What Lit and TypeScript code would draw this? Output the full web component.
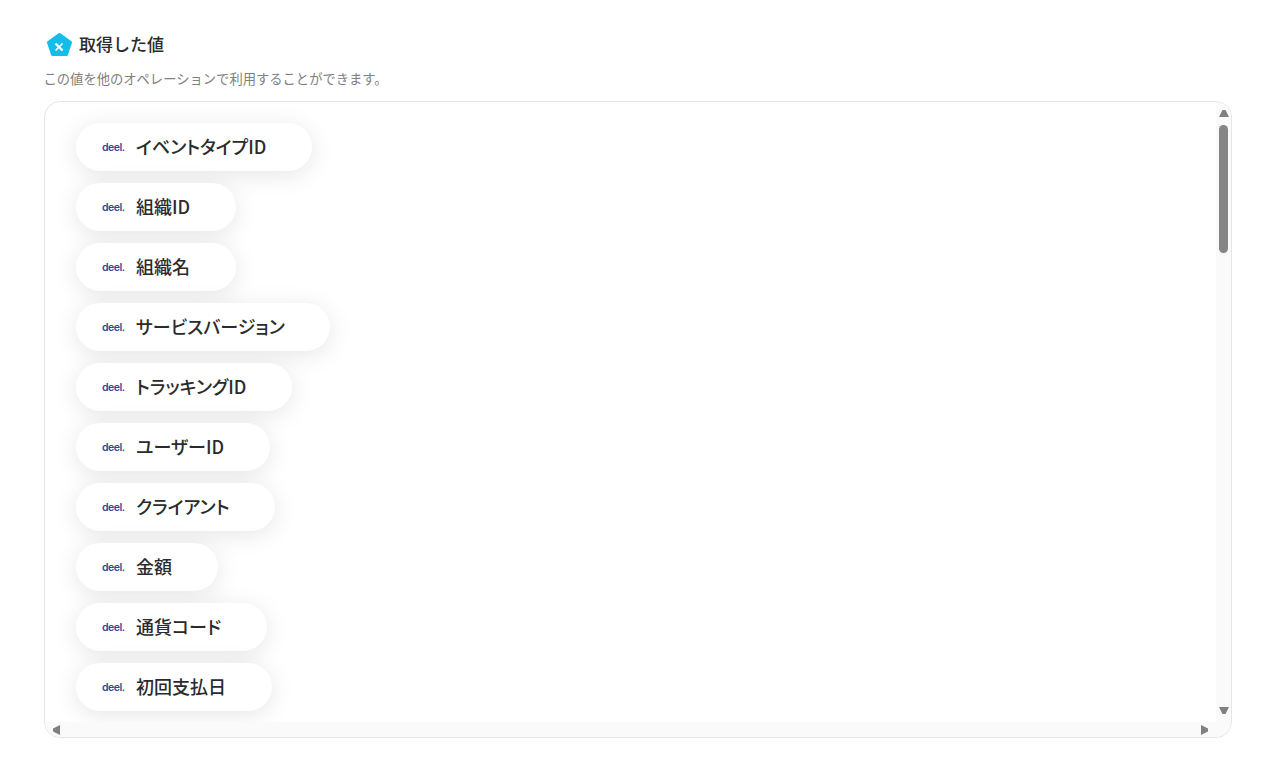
import { LitElement, css, html } from "lit";
import { customElement } from "lit/decorators.js";

const VALUES = [
  "イベントタイプID",
  "組織ID",
  "組織名",
  "サービスバージョン",
  "トラッキングID",
  "ユーザーID",
  "クライアント",
  "金額",
  "通貨コード",
  "初回支払日",
];

@customElement("app-root")
export class AppRoot extends LitElement {
  static styles = css`
    :host {
      display: block;
      height: 776px;
      overflow: hidden;
      background: #fff;
      font-family: "Noto Sans CJK JP", "Noto Sans", sans-serif;
      color: #2b2b2b;
    }

    .page {
      display: flex;
      flex-direction: column;
      padding: 32px 45px 0 44px;
      opacity: 0.999;
    }

    .title {
      display: flex;
      align-items: center;
      gap: 7px;
      height: 26px;
      padding-left: 2px;
      font-size: 17px;
      font-weight: 500;
      line-height: 24px;
    }

    .title svg {
      display: block;
      flex: none;
    }

    .title span {
      margin-top: -2px;
    }

    .hint {
      margin-top: 11px;
      margin-left: -0.5px;
      height: 19px;
      color: #808080;
      font-size: 13.3px;
      line-height: 19px;
    }

    .panel {
      position: relative;
      box-sizing: border-box;
      height: 637px;
      margin-top: 13px;
      overflow: hidden;
      border: 1px solid #e6e6e6;
      border-radius: 16px;
    }

    .list {
      display: flex;
      flex-direction: column;
      align-items: flex-start;
      gap: 12px;
      padding: 21px 0 0 31px;
    }

    .pill {
      display: flex;
      align-items: center;
      gap: 11px;
      height: 48px;
      padding: 0 45.5px 0 26px;
      border-radius: 24px;
      background: #fff;
      box-shadow: 0 4px 24px rgba(0, 0, 0, 0.1);
      font-size: 18px;
      font-weight: 500;
      white-space: nowrap;
      font-feature-settings: "palt";
    }

    .label {
      margin-top: -2px;
    }

    .deel {
      width: 23px;
      color: #2c4a96;
      font-family: Inter, sans-serif;
      font-size: 10.5px;
      font-weight: 600;
      letter-spacing: -0.5px;
    }

    .vbar {
      position: absolute;
      top: 0;
      right: 0;
      bottom: 15px;
      width: 15px;
      background: #fafafa;
    }

    .hbar {
      position: absolute;
      left: 0;
      right: 0;
      bottom: 0;
      height: 15px;
      background: #fafafa;
    }

    .thumb {
      position: absolute;
      top: 23px;
      left: 3px;
      width: 9px;
      height: 128px;
      border-radius: 5px;
      background: #858585;
    }

    .arrow {
      position: absolute;
      background: #808080;
    }

    .up,
    .down {
      left: 3px;
      width: 10px;
      height: 7px;
    }

    .up {
      top: 8px;
      clip-path: polygon(35% 0, 65% 0, 100% 100%, 0 100%);
    }

    .down {
      bottom: 8px;
      clip-path: polygon(0 0, 100% 0, 65% 100%, 35% 100%);
    }

    .left,
    .right {
      top: 3px;
      width: 7px;
      height: 10px;
    }

    .left {
      left: 8px;
      clip-path: polygon(0 35%, 100% 0, 100% 100%, 0 65%);
    }

    .right {
      right: 23px;
      clip-path: polygon(0 0, 100% 35%, 100% 65%, 0 100%);
    }
  `;

  render() {
    return html`
      <div class="page">
        <div class="title">
          <svg width="26" height="26" viewBox="0 0 26 26" aria-hidden="true">
            <polygon
              points="13.5,2.5 24.5,10.5 20.5,22.5 6.5,22.5 2.5,10.5"
              fill="#12bdec"
              stroke="#12bdec"
              stroke-width="3"
              stroke-linejoin="round"
            />
            <path d="M9.5 11.5L16.5 18.5" stroke="#fff" stroke-width="2.4" />
            <path d="M16.5 11.5L9.5 18.5" stroke="#fff" stroke-width="1.6" />
          </svg>
          <span>取得した値</span>
        </div>
        <div class="hint">この値を他のオペレーションで利用することができます。</div>
        <div class="panel">
          <div class="list">
            ${VALUES.map(
              (value) => html`
                <div class="pill">
                  <span class="deel">deel.</span>
                  <span class="label">${value}</span>
                </div>
              `,
            )}
          </div>
          <div class="vbar">
            <div class="arrow up"></div>
            <div class="thumb"></div>
            <div class="arrow down"></div>
          </div>
          <div class="hbar">
            <div class="arrow left"></div>
            <div class="arrow right"></div>
          </div>
        </div>
      </div>
    `;
  }
}

declare global {
  interface HTMLElementTagNameMap {
    "app-root": AppRoot;
  }
}
